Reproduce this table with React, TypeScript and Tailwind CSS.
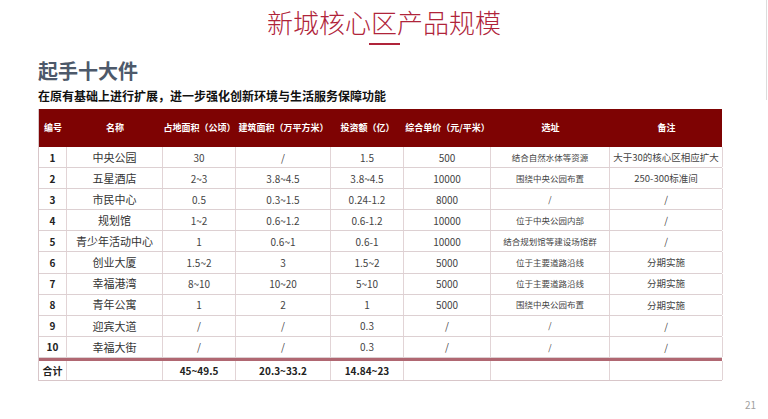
import React from "react"

const font = { fontFamily: '"Noto Sans CJK SC", "Noto Sans", sans-serif' }

type Row = {
  no: string
  name: string
  land: string
  build: string
  invest: string
  price: string
  site: string
  note: string
}

const rows: Row[] = [
  { no: "1", name: "中央公园", land: "30", build: "/", invest: "1.5", price: "500", site: "结合自然水体等资源", note: "大于30的核心区相应扩大" },
  { no: "2", name: "五星酒店", land: "2~3", build: "3.8~4.5", invest: "3.8~4.5", price: "10000", site: "围绕中央公园布置", note: "250-300标准间" },
  { no: "3", name: "市民中心", land: "0.5", build: "0.3~1.5", invest: "0.24-1.2", price: "8000", site: "/", note: "/" },
  { no: "4", name: "规划馆", land: "1~2", build: "0.6~1.2", invest: "0.6-1.2", price: "10000", site: "位于中央公园内部", note: "/" },
  { no: "5", name: "青少年活动中心", land: "1", build: "0.6~1", invest: "0.6-1", price: "10000", site: "结合规划馆等建设场馆群", note: "/" },
  { no: "6", name: "创业大厦", land: "1.5~2", build: "3", invest: "1.5~2", price: "5000", site: "位于主要道路沿线", note: "分期实施" },
  { no: "7", name: "幸福港湾", land: "8~10", build: "10~20", invest: "5~10", price: "5000", site: "位于主要道路沿线", note: "分期实施" },
  { no: "8", name: "青年公寓", land: "1", build: "2", invest: "1", price: "5000", site: "围绕中央公园布置", note: "分期实施" },
  { no: "9", name: "迎宾大道", land: "/", build: "/", invest: "0.3", price: "/", site: "/", note: "/" },
  { no: "10", name: "幸福大街", land: "/", build: "/", invest: "0.3", price: "/", site: "/", note: "/" },
]

const headers = [
  "编号",
  "名称",
  "占地面积（公顷）",
  "建筑面积（万平方米）",
  "投资额（亿）",
  "综合单价（元/平米）",
  "选址",
  "备注",
]

const cols = "grid grid-cols-[28px_96px_73px_95px_73px_87px_119px_113px]"

const Cell: React.FC<{ className?: string; children?: React.ReactNode }> = ({ className = "", children }) => (
  <div className={`flex items-center justify-center whitespace-nowrap border-r border-[#e2d4d6] ${className}`}>
    {children}
  </div>
)

export default function App() {
  return (
    <div className="relative w-[768px] h-[419px] bg-white overflow-hidden text-[#333]" style={font}>
      {/* faint slide edge */}
      <div className="absolute right-[1px] top-0 h-[100px] w-px bg-[#dcdcdc]" />

      <div className="flex flex-col items-center pt-[6px]">
        <h1 className="text-[26px] leading-[31px] font-light text-[#b0243a]">新城核心区产品规模</h1>
        <div className="mt-[6px] h-[2px] w-[31px] bg-[#b0243a]" />
      </div>

      <div className="pl-[38px]">
        <h2 className="mt-[14px] text-[20px] leading-[24px] font-bold text-[#4d596a]">起手十大件</h2>
        <p className="mt-[5px] text-[12px] leading-[16px] font-bold text-[#111]">
          在原有基础上进行扩展，进一步强化创新环境与生活服务保障功能
        </p>

        <div className="mt-[5px] w-[684px] border-l border-b border-[#d8c6c9]">
          {/* header */}
          <div className={`${cols} h-[38px] bg-[#7e0303] text-white text-[9px] font-bold`}>
            {headers.map((h) => (
              <div key={h} className="flex items-center justify-center whitespace-nowrap">
                {h}
              </div>
            ))}
          </div>

          {rows.map((r) => (
            <div key={r.no} className={`${cols} h-[21.1px] border-b border-[#ddd0d2] text-[10px] text-[#444]`}>
              <Cell className="font-bold text-[#222] border-[#c9a2a8]">{r.no}</Cell>
              <Cell className="text-[11px] text-[#333]">{r.name}</Cell>
              <Cell>{r.land}</Cell>
              <Cell>{r.build}</Cell>
              <Cell>{r.invest}</Cell>
              <Cell className="border-[#c9a2a8]">{r.price}</Cell>
              <Cell className="text-[8.5px]">{r.site}</Cell>
              <Cell className="text-[9.5px] border-[#d8c6c9]">{r.note}</Cell>
            </div>
          ))}

          {/* total */}
          <div className={`${cols} h-[22px] border-t-[3px] border-[#b06772] text-[10px] font-bold text-[#222]`}>
            <Cell className="border-[#c9a2a8]">合计</Cell>
            <Cell />
            <Cell>45~49.5</Cell>
            <Cell>20.3~33.2</Cell>
            <Cell>14.84~23</Cell>
            <Cell className="border-[#c9a2a8]" />
            <Cell />
            <Cell className="border-[#d8c6c9]" />
          </div>
        </div>
      </div>

      <div className="absolute right-[12px] bottom-[7px] text-[10px] text-[#a0a0a0]">21</div>
    </div>
  )
}
